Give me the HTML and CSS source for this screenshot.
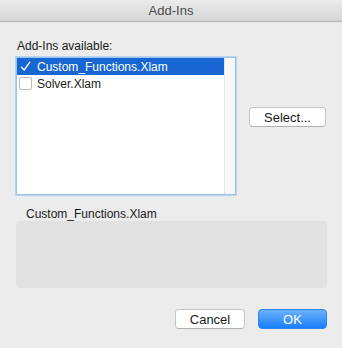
FILE: index.html
```html
<!DOCTYPE html>
<html lang="en">
<head>
  <meta charset="UTF-8" />
  <title>Add-Ins</title>
  <link rel="stylesheet" href="styles.css">
</head>
<body>
  <div class="dialog">
    <div class="titlebar">Add-Ins</div>

    <div class="content">
      <div class="label">Add-Ins available:</div>

      <div class="main-row">
        <div class="listbox">
          <div class="list">
            <div class="item selected">
              <span class="check checked">
                <svg width="13" height="13" viewBox="0 0 13 13"><path d="M2.5 7.2 L5.2 10 L10.8 2.2" fill="none" stroke="#fff" stroke-width="1.3" stroke-linecap="round" stroke-linejoin="round"/></svg>
              </span>
              <span>Custom_Functions.Xlam</span>
            </div>
            <div class="item">
              <span class="check"></span>
              <span>Solver.Xlam</span>
            </div>
          </div>
          <div class="scrollbar"></div>
        </div>
        <button class="btn select-btn">Select...</button>
      </div>

      <div class="detail-name">Custom_Functions.Xlam</div>
      <div class="detail-box"></div>

      <div class="actions">
        <button class="btn">Cancel</button>
        <button class="btn primary">OK</button>
      </div>
    </div>
  </div>
</body>
</html>
```

FILE: styles.css
```css
* { margin: 0; padding: 0; box-sizing: border-box; }
html, body { height: 100%; }

body {
  background: #ececec;
  font-family: "Liberation Sans", Arial, sans-serif;
  font-size: 12px;
  color: #1a1a1a;
}

.dialog {
  width: 342px;
  height: 348px;
  background: #ececec;
}

.titlebar {
  height: 22px;
  line-height: 21px;
  text-align: center;
  color: #4a4a4a;
  font-size: 13px;
  background: linear-gradient(#ebebeb, #d6d6d6);
  border-bottom: 1px solid #b4b4b4;
}

.content {
  padding: 0 15px 0 16px;
}

.label {
  margin-top: 16px;
  height: 19px;
  line-height: 16px;
  padding-left: 1px;
}

/* LIST */
.main-row {
  display: flex;
  align-items: flex-start;
}

.listbox {
  width: 220px;
  height: 138px;
  background: #fff;
  border: 1px solid #9cc3ea;
  box-shadow: 0 0 0 1px #b7d3f0;
  display: flex;
}

.list {
  flex: 1;
}

.item {
  height: 17px;
  display: flex;
  align-items: center;
  gap: 5px;
  padding-left: 2px;
}

.item.selected {
  background: #1766d1;
  color: #fff;
}

.check {
  width: 13px;
  height: 13px;
  border: 1px solid #b9b9b9;
  border-radius: 2px;
  background: #fff;
  display: flex;
}

.check.checked {
  border: none;
  background: transparent;
}

.scrollbar {
  width: 11px;
  background: #f7f7f7;
  border-left: 1px solid #e6e6e6;
}

/* BUTTONS */
.btn {
  height: 20px;
  font-family: inherit;
  font-size: 13px;
  color: #1a1a1a;
  background: #fff;
  border: 1px solid #c6c6c6;
  border-bottom-color: #b0b0b0;
  border-radius: 4px;
}

.select-btn {
  width: 77px;
  margin-top: 50px;
  margin-left: 13px;
}

.detail-name {
  margin-top: 12px;
  padding-left: 10px;
  height: 14px;
  line-height: 14px;
}

.detail-box {
  width: 311px;
  height: 67px;
  background: #e1e1e1;
  border-radius: 4px;
}

.actions {
  display: flex;
  justify-content: flex-end;
  gap: 13px;
  margin-top: 21px;
  width: 311px;
}

.actions .btn {
  width: 70px;
}

.actions .primary {
  width: 69px;
  color: #fff;
  border: 1px solid #2a85f0;
  background: linear-gradient(#6bb1fa, #1a7ffb);
}
```
